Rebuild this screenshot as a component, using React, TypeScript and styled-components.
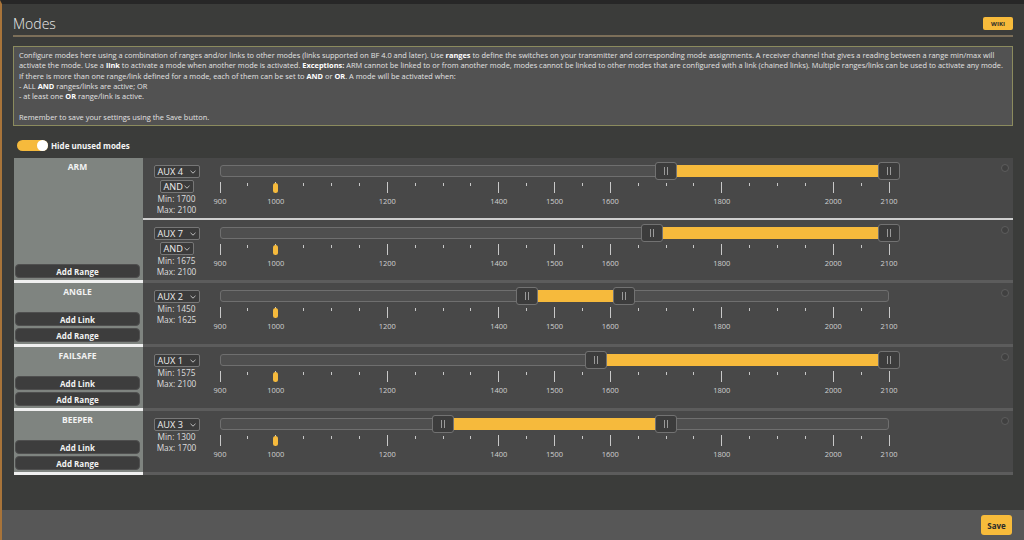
import React from 'react';
import styled, { createGlobalStyle } from 'styled-components';

const GlobalStyle = createGlobalStyle`
    html, body {
        margin: 0;
        padding: 0;
        background: #3b3c3a;
        font-family: "Open Sans", "DejaVu Sans", sans-serif;
    }
`;

const SCALE_MIN = 900;
const SCALE_MAX = 2100;
const LABELED = [900, 1000, 1200, 1400, 1500, 1600, 1800, 2000, 2100];
const CHANNEL_VALUE = 1000;

type Range = { aux: string; min: number; max: number; logic?: boolean };
type Mode = { name: string; canLink: boolean; ranges: Range[] };

const MODES: Mode[] = [
    {
        name: 'ARM',
        canLink: false,
        ranges: [
            { aux: 'AUX 4', min: 1700, max: 2100, logic: true },
            { aux: 'AUX 7', min: 1675, max: 2100, logic: true }
        ]
    },
    { name: 'ANGLE', canLink: true, ranges: [{ aux: 'AUX 2', min: 1450, max: 1625 }] },
    { name: 'FAILSAFE', canLink: true, ranges: [{ aux: 'AUX 1', min: 1575, max: 2100 }] },
    { name: 'BEEPER', canLink: true, ranges: [{ aux: 'AUX 3', min: 1300, max: 1700 }] }
];

const pct = (v: number) => ((v - SCALE_MIN) / (SCALE_MAX - SCALE_MIN)) * 100;

const Page = styled.div`
    height: 100vh;
    display: flex;
    flex-direction: column;
    border-left: 2px solid #a8743a;
    box-sizing: border-box;
    border-top: 4px solid #272727;
`;

const Content = styled.div`
    flex: 1;
    padding: 0 11px 0 11px;
`;

const Header = styled.div`
    height: 33px;
    box-sizing: border-box;
    padding-top: 8px;
    display: flex;
    align-items: center;
    justify-content: space-between;
    border-bottom: 2px solid #7c6f59;
`;

const Title = styled.h1`
    margin: 0;
    font-size: 14px;
    font-weight: 300;
    color: #ececec;
`;

const WikiButton = styled.div`
    width: 30px;
    height: 13px;
    background: #f7bb3b;
    border-radius: 2px;
    color: #2a2a2a;
    font-size: 6px;
    font-weight: 700;
    display: flex;
    align-items: center;
    justify-content: center;
`;

const Note = styled.div`
    margin-top: 9px;
    background: #525252;
    border: 1px solid #8b8b5e;
    padding: 3px 5px 3px 5px;
    font-size: 7.42px;
    line-height: 10.3px;
    color: #e2e2e2;
    white-space: nowrap;
    overflow: hidden;

    b {
        color: #fff;
    }
`;

const ToggleRow = styled.div`
    margin: 14px 0 7px 4px;
    display: flex;
    align-items: center;
    gap: 3px;
    height: 11px;
`;

const Toggle = styled.div`
    width: 31px;
    height: 11px;
    border-radius: 6px;
    background: #f6ba3c;
    position: relative;

    &::after {
        content: '';
        position: absolute;
        right: 0;
        top: 0;
        width: 11px;
        height: 11px;
        border-radius: 50%;
        background: #fff;
    }
`;

const ToggleLabel = styled.span`
    font-size: 8px;
    font-weight: 700;
    color: #f4f4f4;
`;

const ModeList = styled.div`
    margin-left: 1px;
`;

const ModeBlock = styled.div`
    display: flex;
`;

const Info = styled.div`
    width: 129px;
    min-height: 64px;
    box-sizing: border-box;
    flex-shrink: 0;
    background: #7f8480;
    border-bottom: 3px solid #f0f0f0;
    display: flex;
    flex-direction: column;
    padding: 3px 3px 2px 1px;
`;

const ModeName = styled.div`
    text-align: center;
    font-size: 8.5px;
    font-weight: 700;
    line-height: 12px;
    color: #f2f2f2;
    flex: 1;
`;

const InfoButton = styled.div`
    height: 14px;
    box-sizing: border-box;
    background: #3d3d3d;
    border: 1px solid #4f4f4f;
    border-radius: 4px;
    color: #f2f2f2;
    font-size: 8px;
    font-weight: 700;
    display: flex;
    align-items: center;
    justify-content: center;

    & + & {
        margin-top: 2px;
    }
`;

const Ranges = styled.div`
    flex: 1;
    background: #484848;
    border-bottom: 3px solid #5c5c5c;
`;

const RangeRow = styled.div`
    height: 53px;
    display: flex;
    align-items: flex-start;
    padding: 7px 4px 0 10px;

    & + & {
        border-top: 2px solid #cfcfcf;
    }
`;

const Channel = styled.div`
    width: 47px;
    display: flex;
    flex-direction: column;
    align-items: center;
    margin-right: 20px;
`;

const Select = styled.div<{ $w: number }>`
    width: ${(p) => p.$w}px;
    height: 13px;
    box-sizing: border-box;
    border: 1px solid #777;
    border-radius: 2px;
    background: #3b3b3b;
    color: #eee;
    font-size: 9.2px;
    display: flex;
    align-items: center;
    justify-content: space-between;
    padding: 0 3px 0 3px;

    & + & {
        margin-top: 2px;
    }
`;

const MinMax = styled.div`
    font-size: 8.3px;
    line-height: 10.5px;
    color: #dedede;
    text-align: center;
    margin-top: 1px;
`;

const Slider = styled.div`
    position: relative;
    width: 669px;
    height: 46px;
`;

const Track = styled.div`
    position: absolute;
    left: 0;
    right: 0;
    top: 0;
    height: 12px;
    box-sizing: border-box;
    background: #4f4f4f;
    border: 1px solid #6f6f6f;
    border-radius: 3px;
`;

const Fill = styled.div`
    position: absolute;
    top: 0;
    height: 12px;
    background: #f6ba3c;
`;

const Handle = styled.div`
    position: absolute;
    top: -3px;
    width: 22px;
    height: 18px;
    margin-left: -11px;
    box-sizing: border-box;
    background: #3c3c3c;
    border: 1px solid #727272;
    border-radius: 3px;
    display: flex;
    align-items: center;
    justify-content: center;
    gap: 2px;

    &::before, &::after {
        content: '';
        width: 1px;
        height: 8px;
        background: #9a9a9a;
    }
`;

const Tick = styled.div<{ $big: boolean }>`
    position: absolute;
    width: 1px;
    margin-left: -0.5px;
    top: ${(p) => (p.$big ? 17 : 18)}px;
    height: ${(p) => (p.$big ? 11 : 3)}px;
    background: #c8c8c8;
`;

const Marker = styled.div`
    position: absolute;
    top: 18px;
    width: 5px;
    height: 10px;
    margin-left: -2.5px;
    border-radius: 3px;
    background: #f6ba3c;
`;

const TickLabel = styled.div`
    position: absolute;
    top: 32px;
    width: 30px;
    margin-left: -15px;
    text-align: center;
    font-size: 7.5px;
    line-height: 9px;
    color: #d0d0d0;
`;

const Spacer = styled.div`
    flex: 1;
`;

const RemoveDot = styled.div`
    width: 8px;
    height: 8px;
    margin-top: -1px;
    border-radius: 50%;
    box-sizing: border-box;
    background: #404040;
    border: 1px solid #5d5d5d;
`;

const Footer = styled.div`
    height: 30px;
    background: #575757;
    display: flex;
    align-items: center;
    justify-content: flex-end;
    padding-right: 12px;
`;

const SaveButton = styled.div`
    width: 31px;
    height: 20px;
    border-radius: 3px;
    background: #f7bb3b;
    color: #2a2a2a;
    font-size: 8px;
    font-weight: 700;
    display: flex;
    align-items: center;
    justify-content: center;
`;

function Chevron() {
    return (
        <svg width="6" height="4" viewBox="0 0 6 4">
            <path d="M0.5 0.8 L3 3.2 L5.5 0.8" fill="none" stroke="#ccc" strokeWidth="0.9" />
        </svg>
    );
}

const TICKS: number[] = [];
for (let v = SCALE_MIN; v <= SCALE_MAX; v += 50) TICKS.push(v);

function RangeSlider({ min, max }: { min: number; max: number }) {
    return (
        <Slider>
            <Track />
            <Fill style={{ left: `${pct(min)}%`, width: `${pct(max) - pct(min)}%` }} />
            {TICKS.map((v) => (
                <Tick key={v} $big={LABELED.includes(v)} style={{ left: `${pct(v)}%` }} />
            ))}
            <Marker style={{ left: `${pct(CHANNEL_VALUE)}%` }} />
            {LABELED.map((v) => (
                <TickLabel key={v} style={{ left: `${pct(v)}%` }}>{v}</TickLabel>
            ))}
            <Handle style={{ left: `${pct(min)}%` }} />
            <Handle style={{ left: `${pct(max)}%` }} />
        </Slider>
    );
}

export default function App() {
    return (
        <React.Fragment>
            <GlobalStyle />
            <Page>
                <Content>
                    <Header>
                        <Title>Modes</Title>
                        <WikiButton>WIKI</WikiButton>
                    </Header>
                    <Note>
                        Configure modes here using a combination of ranges and/or links to other modes (links supported on BF 4.0 and later). Use <b>ranges</b> to define the switches on your transmitter and corresponding mode assignments. A receiver channel that gives a reading between a range min/max will<br />
                        activate the mode. Use a <b>link</b> to activate a mode when another mode is activated. <b>Exceptions:</b> ARM cannot be linked to or from another mode, modes cannot be linked to other modes that are configured with a link (chained links). Multiple ranges/links can be used to activate any mode.<br />
                        If there is more than one range/link defined for a mode, each of them can be set to <b>AND</b> or <b>OR</b>. A mode will be activated when:<br />
                        - ALL <b>AND</b> ranges/links are active; OR<br />
                        - at least one <b>OR</b> range/link is active.<br />
                        <br />
                        Remember to save your settings using the Save button.
                    </Note>
                    <ToggleRow>
                        <Toggle />
                        <ToggleLabel>Hide unused modes</ToggleLabel>
                    </ToggleRow>
                    <ModeList>
                        {MODES.map((mode) => (
                            <ModeBlock key={mode.name}>
                                <Info>
                                    <ModeName>{mode.name}</ModeName>
                                    {mode.canLink && <InfoButton>Add Link</InfoButton>}
                                    <InfoButton>Add Range</InfoButton>
                                </Info>
                                <Ranges>
                                    {mode.ranges.map((range) => (
                                        <RangeRow key={range.aux}>
                                            <Channel>
                                                <Select $w={46}>{range.aux}<Chevron /></Select>
                                                {range.logic && <Select $w={34}>AND<Chevron /></Select>}
                                                <MinMax>
                                                    Min: {range.min}<br />
                                                    Max: {range.max}
                                                </MinMax>
                                            </Channel>
                                            <RangeSlider min={range.min} max={range.max} />
                                            <Spacer />
                                            <RemoveDot />
                                        </RangeRow>
                                    ))}
                                </Ranges>
                            </ModeBlock>
                        ))}
                    </ModeList>
                </Content>
                <Footer>
                    <SaveButton>Save</SaveButton>
                </Footer>
            </Page>
        </React.Fragment>
    );
}
